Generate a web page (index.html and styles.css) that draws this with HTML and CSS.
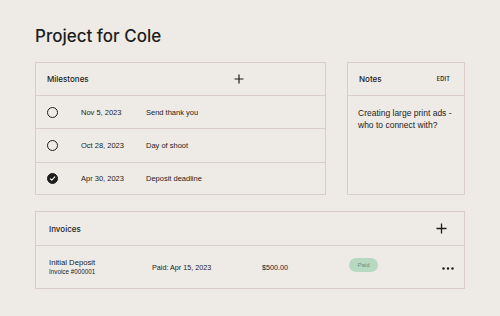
FILE: index.html
```html
<!DOCTYPE html>
<html>
    <head>
        <title>Project for Cole</title>
        <meta charset="UTF-8">
        <meta name="viewport" content="width=device-width, initial-scale=1.0">
        <link rel="stylesheet" href="styles.css">
    </head>
    <body>
        <main class="page">
            <h1 class="page-title">Project for Cole</h1>

            <div class="top-row">
                <!-- Milestones -->
                <section class="card milestones">
                    <header class="card-head milestones-head">
                        <h2 class="card-title">Milestones</h2>
                        <button class="icon-btn" type="button" aria-label="Add milestone">
                            <svg width="10" height="10" viewBox="0 0 10 10"><path d="M5 0.5V9.5M0.5 5H9.5" stroke="#1d1d1d" stroke-width="1.2" fill="none"/></svg>
                        </button>
                    </header>
                    <ul class="milestone-list">
                        <li class="milestone">
                            <span class="check"></span>
                            <span class="milestone-date">Nov 5, 2023</span>
                            <span class="milestone-name">Send thank you</span>
                        </li>
                        <li class="milestone">
                            <span class="check"></span>
                            <span class="milestone-date">Oct 28, 2023</span>
                            <span class="milestone-name">Day of shoot</span>
                        </li>
                        <li class="milestone">
                            <span class="check done">
                                <svg width="7" height="7" viewBox="0 0 7 7"><path d="M1.3 3.8L2.8 5.2L5.8 1.8" stroke="#fff" stroke-width="1.1" fill="none" stroke-linecap="round" stroke-linejoin="round"/></svg>
                            </span>
                            <span class="milestone-date">Apr 30, 2023</span>
                            <span class="milestone-name">Deposit deadline</span>
                        </li>
                    </ul>
                </section>

                <!-- Notes -->
                <section class="card notes">
                    <header class="card-head">
                        <h2 class="card-title">Notes</h2>
                        <button class="text-btn" type="button">EDIT</button>
                    </header>
                    <p class="notes-body">Creating large print ads - who to connect with?</p>
                </section>
            </div>

            <!-- Invoices -->
            <section class="card invoices">
                <header class="card-head invoices-head">
                    <h2 class="card-title">Invoices</h2>
                    <button class="icon-btn" type="button" aria-label="Add invoice">
                        <svg width="11" height="11" viewBox="0 0 11 11"><path d="M5.5 0.5V10.5M0.5 5.5H10.5" stroke="#1d1d1d" stroke-width="1.3" fill="none"/></svg>
                    </button>
                </header>
                <div class="invoice-row">
                    <div class="invoice-name">
                        <span>Initial Deposit</span>
                        <span class="invoice-number">Invoice #000001</span>
                    </div>
                    <span class="invoice-paid">Paid: Apr 15, 2023</span>
                    <span class="invoice-amount">$500.00</span>
                    <span class="status-pill">Paid</span>
                    <button class="icon-btn more-btn" type="button" aria-label="More">
                        <svg width="12" height="3" viewBox="0 0 12 3"><circle cx="1.5" cy="1.5" r="1.2" fill="#1d1d1d"/><circle cx="6" cy="1.5" r="1.2" fill="#1d1d1d"/><circle cx="10.5" cy="1.5" r="1.2" fill="#1d1d1d"/></svg>
                    </button>
                </div>
            </section>
        </main>
    </body>
</html>
```

FILE: styles.css
```css
    body {
        margin: 0;
        background-color: #eeebe6;
        color: #1c1c1c;
        font-family: "Liberation Sans", Arial, sans-serif;
    }

    .page {
        padding: 26px 35px 0 35px;
    }

    .page-title {
        margin: 0 0 15px 0;
        font-family: Inter, sans-serif;
        font-size: 17px;
        line-height: 21px;
        font-weight: 500;
        color: #1d1d1d;
    }

    .top-row {
        display: grid;
        grid-template-columns: 1fr 118px;
        gap: 21px;
        margin-bottom: 16px;
    }

    .card {
        border: 1px solid #d8cdc7;
    }

    .card-head {
        display: flex;
        align-items: center;
        justify-content: space-between;
        height: 32px;
        padding: 0 12px 0 11px;
        border-bottom: 1px solid #d8cdc7;
    }

    .card-title {
        margin: 0;
        font-family: Inter, sans-serif;
        font-size: 8px;
        font-weight: 500;
        color: #1d1d1d;
    }

    .icon-btn {
        display: flex;
        padding: 0;
        border: none;
        background: none;
        cursor: pointer;
    }

    .text-btn {
        padding: 0;
        border: none;
        background: none;
        font-family: Inter, sans-serif;
        font-size: 5.5px;
        font-weight: 600;
        letter-spacing: 0.2px;
        color: #1d1d1d;
        cursor: pointer;
    }

    /* Milestones */
    .milestones-head {
        padding-right: 81px;
    }

    .milestone-list {
        list-style: none;
        margin: 0;
        padding: 0;
    }

    .milestone {
        display: grid;
        grid-template-columns: 34px 65px 1fr;
        align-items: center;
        height: 32px;
        padding-left: 11px;
        font-size: 7.5px;
        border-bottom: 1px solid #d8cdc7;
    }

    .milestone:nth-child(2) {
        height: 33px;
    }

    .milestone:last-child {
        border-bottom: none;
        height: 31px;
    }

    .check {
        display: flex;
        align-items: center;
        justify-content: center;
        box-sizing: border-box;
        width: 11px;
        height: 11px;
        border: 1.3px solid #1d1d1d;
        border-radius: 50%;
    }

    .check.done {
        background-color: #1d1d1d;
    }

    /* Notes */
    .notes .card-head {
        padding-right: 14px;
    }

    .notes-body {
        margin: 0;
        padding: 11px 10px 0 10px;
        font-size: 8.5px;
        line-height: 12px;
    }

    /* Invoices */
    .invoices-head {
        height: 33px;
        padding: 0 17px 0 13px;
    }

    .invoice-row {
        display: grid;
        grid-template-columns: 103px 110px 87px 1fr auto;
        align-items: center;
        height: 42px;
        padding: 0 10px 0 13px;
        font-size: 7.2px;
    }

    .invoice-name {
        display: flex;
        flex-direction: column;
        gap: 1px;
        margin-top: -2px;
        font-size: 7.7px;
    }

    .invoice-number {
        font-size: 6.3px;
    }

    .status-pill {
        justify-self: start;
        width: 29px;
        height: 14px;
        line-height: 14px;
        text-align: center;
        border-radius: 7px;
        background-color: #b8d9c1;
        color: #6c8c74;
        font-size: 6px;
        margin-top: -4px;
    }

    .more-btn {
        margin-top: 3px;
    }
```
